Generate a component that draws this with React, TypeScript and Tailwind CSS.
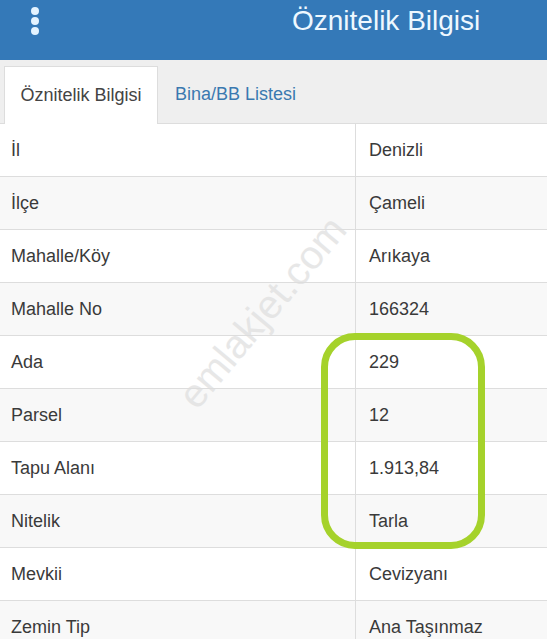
import React from "react";

const rows: [string, string][] = [
  ["İl", "Denizli"],
  ["İlçe", "Çameli"],
  ["Mahalle/Köy", "Arıkaya"],
  ["Mahalle No", "166324"],
  ["Ada", "229"],
  ["Parsel", "12"],
  ["Tapu Alanı", "1.913,84"],
  ["Nitelik", "Tarla"],
  ["Mevkii", "Cevizyanı"],
  ["Zemin Tip", "Ana Taşınmaz"],
];

export default function App() {
  return (
    <div
      className="relative w-[547px] h-[639px] overflow-hidden bg-white text-[#3a3a3a]"
      style={{ fontFamily: '"Liberation Sans", Arial, sans-serif' }}
    >
      {/* header */}
      <div className="h-[60px] bg-[#3479b8] flex items-start">
        <div className="ml-[31px] mt-[7px] flex flex-col gap-[2px]">
          <span className="block w-[8px] h-[8px] rounded-full bg-[#e3f3ff]" />
          <span className="block w-[8px] h-[8px] rounded-full bg-[#e3f3ff]" />
          <span className="block w-[8px] h-[8px] rounded-full bg-[#e3f3ff]" />
        </div>
        <div className="ml-[253px] mt-[4px] text-[28px] leading-[34px] text-[#eef8ff]">
          Öznitelik Bilgisi
        </div>
      </div>

      {/* tabs */}
      <div className="h-[64px] bg-[#efefef] flex items-end pl-[4px] border-b border-[#dddddd]">
        <div className="h-[58px] w-[154px] bg-white border border-b-0 border-[#dddddd] flex items-center justify-center text-[18px] text-[#444] -mb-px">
          Öznitelik Bilgisi
        </div>
        <div className="h-[58px] flex items-center pl-[17px] text-[18px] text-[#3a79b0]">
          Bina/BB Listesi
        </div>
      </div>

      {/* table */}
      <div className="flex flex-col">
        {rows.map(([k, v], i) => (
          <div
            key={k}
            className={`flex h-[53px] border-b border-[#dddddd] text-[18px] ${i % 2 === 1 ? "bg-[#f8f8f8]" : "bg-white"}`}
          >
            <div className="w-[356px] border-r border-[#dddddd] pl-[11px] flex items-center">{k}</div>
            <div className="flex-1 pl-[13px] flex items-center">{v}</div>
          </div>
        ))}
      </div>

      {/* watermark */}
      <div className="absolute left-[262px] top-[312px] -translate-x-1/2 -translate-y-1/2 -rotate-[50deg] text-[40px] text-[#dedede] opacity-70 whitespace-nowrap pointer-events-none">
        emlakjet.com
      </div>

      {/* highlight */}
      <div className="absolute left-[321px] top-[333px] w-[164px] h-[216px] border-[7px] border-[#a5d22b] rounded-[34px] pointer-events-none" />
    </div>
  );
}
